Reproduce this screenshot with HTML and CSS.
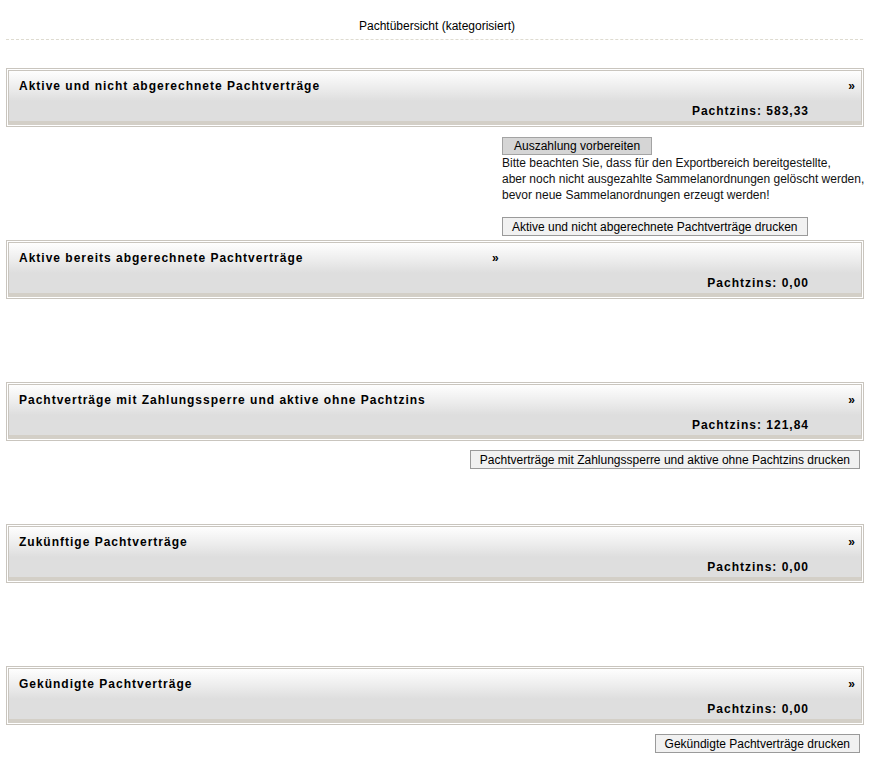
FILE: index.html
```html
<!DOCTYPE html>
<html lang="de">
<head>
    <meta charset="UTF-8">
    <title>Pachtübersicht</title>
    <link rel="stylesheet" href="styles.css">
</head>
<body>
    <div class="page-header">Pachtübersicht (kategorisiert)</div>

    <!-- Aktive, nicht abgerechnet -->
    <div class="section">
        <div class="box">
            <div class="box-inner">
                <div class="box-head">
                    <span class="box-title">Aktive und nicht abgerechnete Pachtverträge</span>
                    <span class="toggle">»</span>
                </div>
                <div class="box-sum">Pachtzins: 583,33</div>
            </div>
        </div>
        <div class="actions">
            <div class="notice">
                <button class="btn btn-grey">Auszahlung vorbereiten</button>
                <p class="notice-text">Bitte beachten Sie, dass für den Exportbereich bereitgestellte,<br>aber noch nicht ausgezahlte Sammelanordnungen gelöscht werden,<br>bevor neue Sammelanordnungen erzeugt werden!</p>
                <button class="btn">Aktive und nicht abgerechnete Pachtverträge drucken</button>
            </div>
        </div>
    </div>

    <!-- Aktive, bereits abgerechnet -->
    <div class="section">
        <div class="box">
            <div class="box-inner">
                <div class="box-head box-head-short">
                    <span class="box-title">Aktive bereits abgerechnete Pachtverträge</span>
                    <span class="toggle">»</span>
                </div>
                <div class="box-sum">Pachtzins: 0,00</div>
            </div>
        </div>
        <div class="actions"></div>
    </div>

    <!-- Zahlungssperre -->
    <div class="section">
        <div class="box">
            <div class="box-inner">
                <div class="box-head">
                    <span class="box-title">Pachtverträge mit Zahlungssperre und aktive ohne Pachtzins</span>
                    <span class="toggle">»</span>
                </div>
                <div class="box-sum">Pachtzins: 121,84</div>
            </div>
        </div>
        <div class="actions actions-right">
            <button class="btn">Pachtverträge mit Zahlungssperre und aktive ohne Pachtzins drucken</button>
        </div>
    </div>

    <!-- Zukünftige -->
    <div class="section">
        <div class="box">
            <div class="box-inner">
                <div class="box-head">
                    <span class="box-title">Zukünftige Pachtverträge</span>
                    <span class="toggle">»</span>
                </div>
                <div class="box-sum">Pachtzins: 0,00</div>
            </div>
        </div>
        <div class="actions"></div>
    </div>

    <!-- Gekündigte -->
    <div class="section">
        <div class="box">
            <div class="box-inner">
                <div class="box-head">
                    <span class="box-title">Gekündigte Pachtverträge</span>
                    <span class="toggle">»</span>
                </div>
                <div class="box-sum">Pachtzins: 0,00</div>
            </div>
        </div>
        <div class="actions actions-right">
            <button class="btn">Gekündigte Pachtverträge drucken</button>
        </div>
    </div>
</body>
</html>
```

FILE: styles.css
```css
* {
    margin: 0;
    padding: 0;
    box-sizing: border-box;
}

body {
    margin: 0 6px;
    font-family: "Liberation Sans", Arial, sans-serif;
    font-size: 12px;
    color: #000;
    background-color: #fff;
}

.page-header {
    padding-top: 19px;
    padding-bottom: 6px;
    line-height: 14px;
    text-align: center;
    border-bottom: 1px dashed #dedbd0;
    margin-right: -4px;
    margin-bottom: 28px;
}

.box {
    border: 1px solid #c9c5be;
    padding: 1px;
    background-color: #fff;
}

.box-inner {
    border: 1px solid #c9c5be;
    border-bottom: 4px solid #d3cfc7;
    padding: 7px 6px 2px 10px;
    background: linear-gradient(#fefefe 0%, #ececec 35%, #dedede 60%, #dedede 100%);
}

.box-head {
    display: flex;
    justify-content: space-between;
    line-height: 16px;
    font-weight: bold;
    letter-spacing: 1px;
}

.box-head-short {
    justify-content: flex-start;
}

.box-head-short .box-title {
    width: 473px;
}

.toggle {
    letter-spacing: 0;
    font-size: 12px;
}

.box-sum {
    margin-top: 9px;
    padding-right: 46px;
    line-height: 16px;
    text-align: right;
    font-weight: bold;
    letter-spacing: 1px;
}

.actions {
    min-height: 83px;
    padding: 10px 0 4px;
}

.actions-right {
    display: flex;
    justify-content: flex-end;
    align-items: flex-start;
    padding-top: 9px;
    padding-right: 4px;
}

.notice {
    margin-left: 496px;
}

.notice-text {
    line-height: 16px;
    margin-bottom: 14px;
    color: #111;
    white-space: nowrap;
}

.btn {
    font-family: "Liberation Sans", Arial, sans-serif;
    font-size: 12px;
    line-height: 16px;
    height: 19px;
    padding: 0 9px;
    color: #000;
    background-color: #f1f1f1;
    border: 1px solid #9a9a9a;
}

.btn-grey {
    height: 18px;
    padding: 0 11px;
    background-color: #d5d5d5;
    border-color: #a3a3a3;
}
```
